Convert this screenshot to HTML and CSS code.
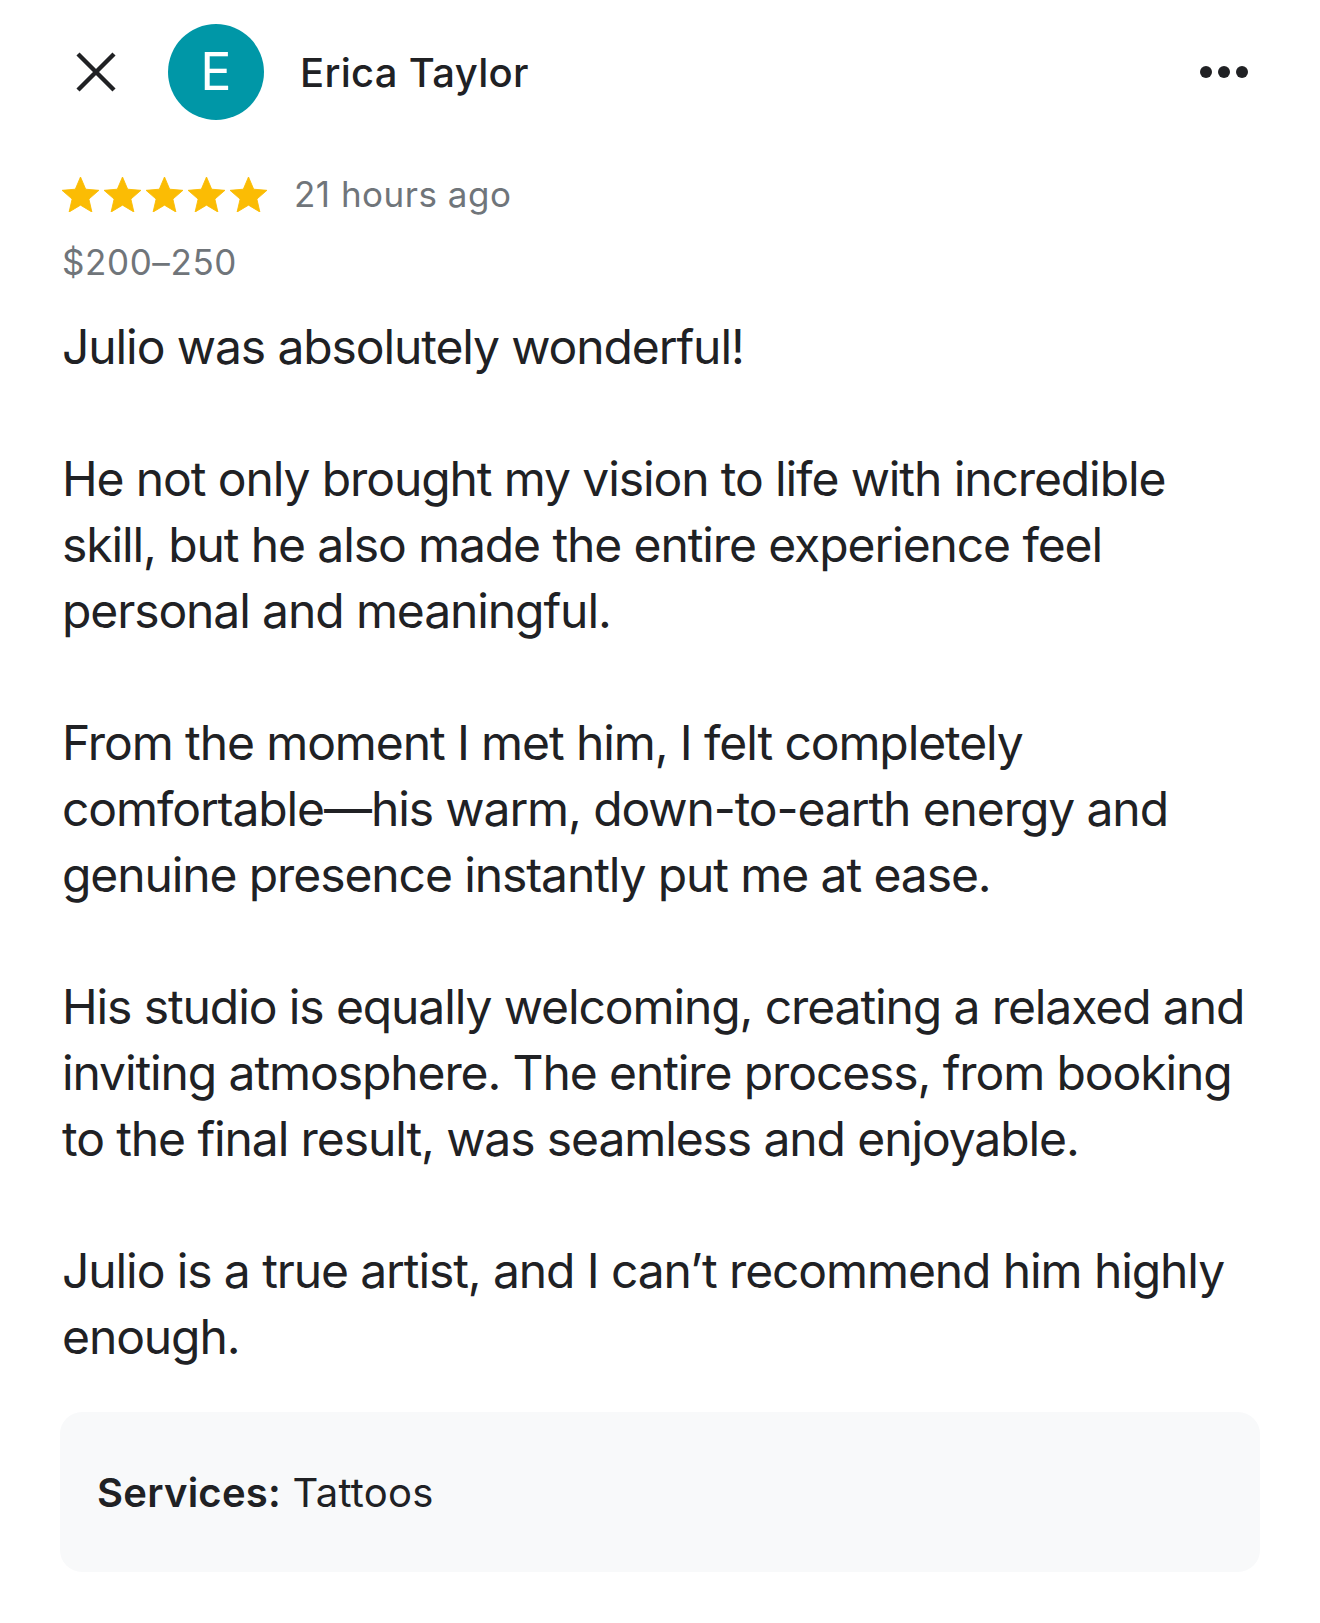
FILE: index.html
```html
<!DOCTYPE html>
<html lang="en">
<head>
<meta charset="utf-8">
<title>Review</title>
<link rel="stylesheet" href="styles.css">
</head>
<body>
<main class="page">
  <header class="header">
    <button class="icon-btn close" aria-label="Close">
      <svg width="42" height="42" viewBox="0 0 42 42"><path d="M3 3 L39 39 M39 3 L3 39" stroke="#202124" stroke-width="4.4" stroke-linecap="butt" fill="none"/></svg>
    </button>
    <div class="avatar">E</div>
    <div class="name">Erica Taylor</div>
    <button class="icon-btn more" aria-label="More">
      <span class="dot"></span><span class="dot"></span><span class="dot"></span>
    </button>
  </header>

  <div class="meta">
    <div class="stars">
      <svg class="star" viewBox="2 2 20 19"><path d="M12 17.27L18.18 21l-1.64-7.03L22 9.24l-7.19-.61L12 2 9.19 8.63 2 9.24l5.46 4.73L5.82 21z" fill="#fbbc04" stroke="#fbbc04" stroke-width="0.5" stroke-linejoin="round"/></svg>
      <svg class="star" viewBox="2 2 20 19"><path d="M12 17.27L18.18 21l-1.64-7.03L22 9.24l-7.19-.61L12 2 9.19 8.63 2 9.24l5.46 4.73L5.82 21z" fill="#fbbc04" stroke="#fbbc04" stroke-width="0.5" stroke-linejoin="round"/></svg>
      <svg class="star" viewBox="2 2 20 19"><path d="M12 17.27L18.18 21l-1.64-7.03L22 9.24l-7.19-.61L12 2 9.19 8.63 2 9.24l5.46 4.73L5.82 21z" fill="#fbbc04" stroke="#fbbc04" stroke-width="0.5" stroke-linejoin="round"/></svg>
      <svg class="star" viewBox="2 2 20 19"><path d="M12 17.27L18.18 21l-1.64-7.03L22 9.24l-7.19-.61L12 2 9.19 8.63 2 9.24l5.46 4.73L5.82 21z" fill="#fbbc04" stroke="#fbbc04" stroke-width="0.5" stroke-linejoin="round"/></svg>
      <svg class="star" viewBox="2 2 20 19"><path d="M12 17.27L18.18 21l-1.64-7.03L22 9.24l-7.19-.61L12 2 9.19 8.63 2 9.24l5.46 4.73L5.82 21z" fill="#fbbc04" stroke="#fbbc04" stroke-width="0.5" stroke-linejoin="round"/></svg>
    </div>
    <span class="time">21 hours ago</span>
  </div>

  <div class="price">$200–250</div>

  <div class="review">
    <p>Julio was absolutely wonderful!</p>
    <p>He not only brought my vision to life with incredible<br>skill, but he also made the entire experience feel<br>personal and meaningful.</p>
    <p>From the moment I met him, I felt completely<br>comfortable—his warm, down-to-earth energy and<br>genuine presence instantly put me at ease.</p>
    <p>His studio is equally welcoming, creating a relaxed and<br>inviting atmosphere. The entire process, from booking<br>to the final result, was seamless and enjoyable.</p>
    <p>Julio is a true artist, and I can’t recommend him highly<br>enough.</p>
  </div>

  <div class="services">
    <span class="services-text"><span class="label">Services:</span> Tattoos</span>
  </div>
</main>
</body>
</html>
```
FILE: styles.css
```css
* { box-sizing: border-box; }

html, body {
  margin: 0;
  padding: 0;
  background: #ffffff;
}

body {
  font-family: Inter, Roboto, "Noto Sans", sans-serif;
  color: #202124;
}

.page {
  width: 1320px;
  padding: 24px 60px 0 62px;
}

.header {
  display: flex;
  align-items: center;
  height: 96px;
}

.icon-btn {
  border: 0;
  background: none;
  padding: 0;
  margin: 0;
  cursor: pointer;
}

.close {
  width: 42px;
  height: 42px;
  margin-left: 13px;
  display: flex;
}

.avatar {
  width: 96px;
  height: 96px;
  border-radius: 50%;
  background: #0097a7;
  color: #ffffff;
  font-size: 52px;
  font-weight: 400;
  display: flex;
  align-items: center;
  justify-content: center;
  margin-left: 51px;
  line-height: 1;
}

.name {
  margin-left: 36px;
  font-size: 40px;
  font-weight: 500;
  letter-spacing: 0.3px;
  flex: 1;
}

.more {
  display: flex;
  gap: 6px;
  margin-right: 12px;
}

.dot {
  width: 12px;
  height: 12px;
  border-radius: 50%;
  background: #202124;
}

.meta {
  display: flex;
  align-items: center;
  margin-top: 52px;
  height: 44px;
}

.stars {
  display: flex;
  gap: 5px;
  margin-left: 0;
}

.star {
  width: 37px;
  height: 35px;
}

.time {
  margin-left: 27px;
  font-size: 35px;
  color: #70757a;
  letter-spacing: 0.5px;
}

.price {
  margin-top: 24px;
  font-size: 35px;
  line-height: 44px;
  color: #70757a;
  letter-spacing: 0.6px;
}

.review {
  margin-top: 30px;
  font-size: 48px;
  line-height: 66px;
  letter-spacing: -1.1px;
}

.review p {
  margin: 0 0 66px;
  white-space: nowrap;
}

.review p:last-child {
  margin-bottom: 0;
}

.services {
  margin-top: 42px;
  width: 1200px;
  margin-left: -2px;
  height: 160px;
  border-radius: 22px;
  background: #f8f9fa;
  display: flex;
  align-items: center;
  padding-left: 37px;
  font-size: 40px;
}

.services-text {
  white-space: nowrap;
  letter-spacing: 0.25px;
}

.services .label {
  font-weight: 600;
}
```
